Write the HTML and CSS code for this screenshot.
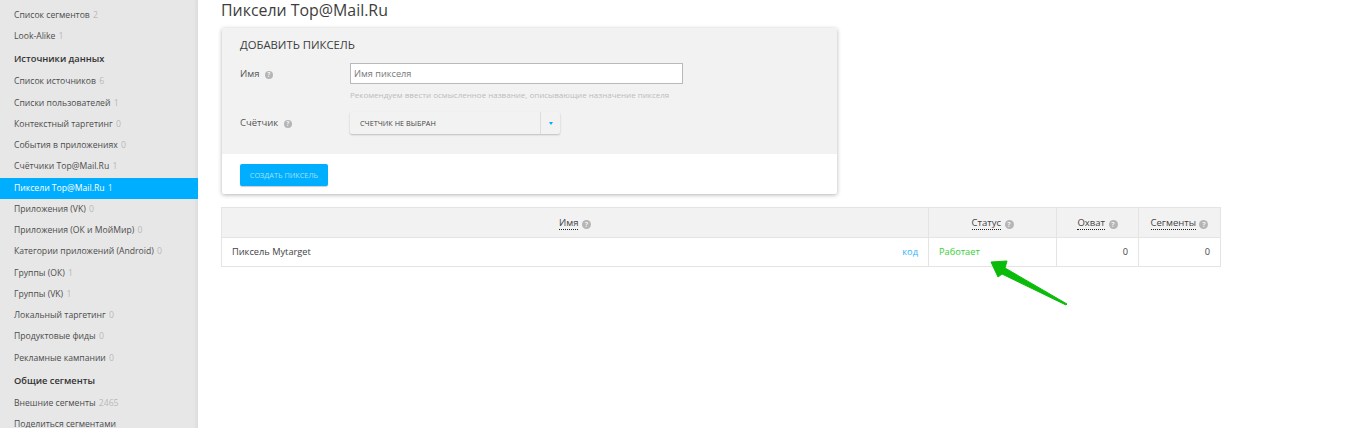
FILE: index.html
```html
<!DOCTYPE html>
<html lang="ru">
<head>
<meta charset="utf-8">
<title>Пиксели Top@Mail.Ru</title>
<link rel="stylesheet" href="styles.css">
</head>
<body>
<div class="page">
  <nav class="side">
    <a class="item">Список сегментов <i>2</i></a>
    <a class="item">Look-Alike <i>1</i></a>
    <div class="head">Источники данных</div>
    <a class="item">Список источников <i>6</i></a>
    <a class="item">Списки пользователей <i>1</i></a>
    <a class="item">Контекстный таргетинг <i>0</i></a>
    <a class="item">События в приложениях <i>0</i></a>
    <a class="item">Счётчики Top@Mail.Ru <i>1</i></a>
    <a class="item active">Пиксели Top@Mail.Ru <i>1</i></a>
    <a class="item">Приложения (VK) <i>0</i></a>
    <a class="item">Приложения (ОК и МойМир) <i>0</i></a>
    <a class="item">Категории приложений (Android) <i>0</i></a>
    <a class="item">Группы (ОК) <i>1</i></a>
    <a class="item">Группы (VK) <i>1</i></a>
    <a class="item">Локальный таргетинг <i>0</i></a>
    <a class="item">Продуктовые фиды <i>0</i></a>
    <a class="item">Рекламные кампании <i>0</i></a>
    <div class="head">Общие сегменты</div>
    <a class="item">Внешние сегменты <i>2465</i></a>
    <a class="item">Поделиться сегментами</a>
  </nav>
  <main class="main">
    <h1 class="title">Пиксели Top@Mail.Ru</h1>
    <section class="card">
      <div class="card-body">
        <h2 class="card-title">ДОБАВИТЬ ПИКСЕЛЬ</h2>
        <div class="field field-name">
          <label class="label">Имя <span class="q">?</span></label>
          <div class="control">
            <input class="input" placeholder="Имя пикселя">
            <p class="hint">Рекомендуем ввести осмысленное название, описывающие назначение пикселя</p>
          </div>
        </div>
        <div class="field field-counter">
          <label class="label">Счётчик <span class="q">?</span></label>
          <div class="select">
            <span class="select-text">СЧЕТЧИК НЕ ВЫБРАН</span>
            <span class="select-arrow"><svg width="4" height="3" viewBox="0 0 4 3"><path d="M0 0h4L2 3z" fill="#00aeff"/></svg></span>
          </div>
        </div>
      </div>
      <div class="card-foot"><button class="btn">СОЗДАТЬ ПИКСЕЛЬ</button></div>
    </section>
    <div class="table-wrap">
      <table class="table">
        <thead>
          <tr>
            <th class="c-name"><span class="dotted">Имя</span> <span class="q">?</span></th>
            <th class="c-status"><span class="dotted">Статус</span> <span class="q">?</span></th>
            <th class="c-reach"><span class="dotted">Охват</span> <span class="q">?</span></th>
            <th class="c-seg"><span class="dotted">Сегменты</span> <span class="q">?</span></th>
          </tr>
        </thead>
        <tbody>
          <tr>
            <td><div class="name-cell"><span>Пиксель Mytarget</span><a class="code">код</a></div></td>
            <td class="ok">Работает</td>
            <td class="num">0</td>
            <td class="num">0</td>
          </tr>
        </tbody>
      </table>
      <svg class="arrow" width="90" height="56" viewBox="0 0 90 56"><path d="M6 4 22 3 20 10 82 46 81 47 17 16 13 19z" fill="#0abb0a" stroke="#0abb0a" stroke-width="1" stroke-linejoin="round"/></svg>
    </div>
  </main>
</div>
</body>
</html>
```
FILE: styles.css
```css
* { box-sizing: border-box; }
html, body { margin: 0; height: 100%; overflow: hidden; background: #fff; }
body { font-family: "Open Sans", "Noto Sans", sans-serif; font-size: 9px; color: #444; }
.page { display: flex; height: 428px; overflow: hidden; }

.side {
  width: 198px; flex: none; height: 428px; overflow: hidden;
  background: #e7e7e7; padding-top: 4.9px;
  box-shadow: inset -5px 0 5px -4px rgba(0,0,0,.07);
}
.item { display: block; height: 21.25px; line-height: 21.25px; padding-left: 14px; font-size: 8.65px; color: #4c4c4c; white-space: nowrap; }
.item i { font-style: normal; color: #b9b9b9; margin-left: 1px; }
.item.active { background: #00aeff; color: #fff; }
.item.active i { color: #d8f2ff; }
.head { height: 24px; line-height: 23px; padding-left: 14px; font-size: 9.3px; font-weight: 600; color: #333; }

.main { flex: 1; min-width: 0; padding-left: 23px; }
.title { margin: 0; height: 28px; line-height: 20px; font-size: 15.9px; font-weight: 400; color: #3d3d3d; white-space: nowrap; }

.card { width: 615px; height: 166px; margin-left: 1px; background: #fff; box-shadow: 0 1px 4px rgba(0,0,0,.3); border-radius: 2px; display: flex; flex-direction: column; }
.card-body { height: 126px; background: #f2f2f2; padding: 9px 18px 0; }
.card-title { margin: 0; font-size: 11.3px; font-weight: 400; line-height: 15px; color: #3d3d3d; }
.field { display: flex; }
.field-name { margin-top: 11px; }
.field-counter { margin-top: 12px; }
.label { width: 110px; flex: none; font-size: 9.5px; line-height: 21px; color: #555; }
.field-counter .label { line-height: 22px; }
.q { display: inline-block; width: 9px; height: 9px; margin-left: 1px; border-radius: 50%; background: #b5b5b5; color: #f2f2f2; font-size: 7px; font-weight: 700; line-height: 9px; text-align: center; vertical-align: -1px; }
.label .q { width: 8px; height: 8px; margin-left: 3px; font-size: 6.5px; line-height: 8px; vertical-align: 0; }
.control { width: 333px; }
.input { display: block; width: 333px; height: 21px; border: 1px solid #b9b9b9; background: #fff; padding: 0 3px; font: 9.2px "Open Sans", sans-serif; color: #555; outline: none; }
.input::placeholder { color: #777; opacity: 1; }
.hint { margin: 5px 0 0; font-size: 8px; line-height: 11px; color: #bcbcbc; white-space: nowrap; }
.select { width: 210px; height: 22px; display: flex; align-items: center; background: #f2f2f2; border-radius: 2px; box-shadow: 0 1px 2px rgba(0,0,0,.22); }
.select-text { flex: 1; padding-left: 10px; font-size: 7.3px; color: #444; }
.select-arrow { width: 20px; height: 100%; display: flex; align-items: center; justify-content: center; border-left: 1px solid #ddd; }
.card-foot { padding: 10px 18px 0; background: #fff; }
.btn { display: block; width: 88px; height: 22px; border: 0; padding: 0; border-radius: 2px; background: #00aeff; color: #a5e0fb; font: 7.3px "Open Sans", sans-serif; box-shadow: 0 1px 1px rgba(0,0,0,.2); }

.table-wrap { position: relative; width: 1000px; margin-top: 13px; }
.table { width: 1000px; height: 60px; border-collapse: collapse; table-layout: fixed; }
.table th, .table td { border: 1px solid #e4e4e4; }
.table th { height: 30px; background: #f2f2f2; font-size: 9.5px; font-weight: 400; color: #444; text-align: center; padding: 0; }
.table td { height: 29px; padding: 0 10px 1px; font-size: 9.25px; color: #444; }
.c-status { width: 128px; }
.c-reach { width: 82px; }
.c-seg { width: 82px; }
.dotted { border-bottom: 1px dotted #222; }
.name-cell { display: flex; justify-content: space-between; }
.code { color: #2fb4f8; }
.table td.ok { color: #35d035; }
.table td.num { text-align: right; }
.arrow { position: absolute; left: 764px; top: 51px; }
```
